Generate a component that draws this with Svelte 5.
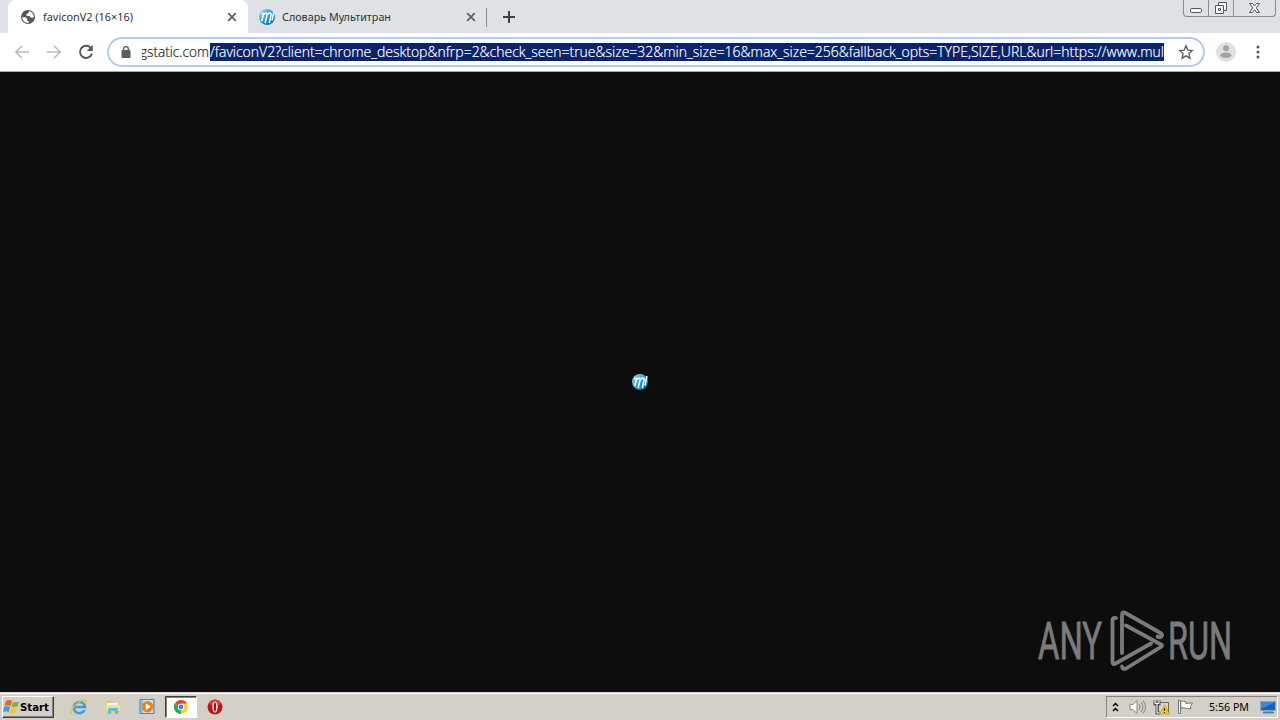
<script lang="ts">
  const tabs = [
    { title: "faviconV2 (16×16)", icon: "globe", width: 90, active: true },
    { title: "Словарь Мультитран", icon: "site", width: 109, active: false },
  ];
  const host = "gstatic.com";
  const path =
    "/faviconV2?client=chrome_desktop&nfrp=2&check_seen=true&size=32&min_size=16&max_size=256&fallback_opts=TYPE,SIZE,URL&url=https://www.mul";
  const time = "5:56 PM";
</script>

{#snippet siteIcon(id: string)}
  <svg class="icon16" viewBox="0 0 16 16">
    <defs>
      <linearGradient id={id} x1="0" y1="0" x2="1" y2="1">
        <stop offset="0" stop-color="#b5dbe9" />
        <stop offset=".5" stop-color="#2b9fd0" />
        <stop offset="1" stop-color="#075e96" />
      </linearGradient>
    </defs>
    <circle cx="8" cy="8" r="8" fill={`url(#${id})`} />
    <path d="M2 4.6h2.6L2.8 12M5 5.2c2.2-1.7 3.4-1 3 .8L6.2 14M8.9 5.2c2-1.8 3.7-1.3 3.2.7L10.3 14M15 2.2 13 11.5" fill="none" stroke="#fff" stroke-width="1.5" />
  </svg>
{/snippet}

<div class="screen">
  <header class="tabstrip">
    {#each tabs as tab}
      <div class="tab" class:active={tab.active}>
        {#if tab.icon === "globe"}
          <svg class="icon16" viewBox="0 0 16 16">
            <circle cx="8" cy="8" r="7" fill="#55585c" />
            <path d="M2.2 8.2h3.2l2 1.7-.2 1.5 1.4 1v1.5C4.8 14 2.3 11.5 2.2 8.2zM9.2 2.2c2.8.6 4.6 3 4.7 5.5l-1 1.1-2.4-.4-1-1.3H7L6 5.6l2-1.2z" fill="#fff" />
          </svg>
        {:else}
          {@render siteIcon("tab-icon")}
        {/if}
        <svg class="title" width="184" height="18">
          <text x="0" y="13" textLength={tab.width} lengthAdjust="spacingAndGlyphs">{tab.title}</text>
        </svg>
        <svg class="close" viewBox="0 0 10 10"><path d="m1.2 1.2 7.6 7.6m0-7.6L1.2 8.8" /></svg>
      </div>
    {/each}
    <span class="divider"></span>
    <svg class="plus" viewBox="0 0 14 14"><path d="M7 1v12M1 7h12" /></svg>
    <div class="window-buttons">
      <span class="min"><svg width="12" height="5"><rect x=".5" y=".5" width="11" height="4" rx="1" /></svg></span>
      <span class="restore">
        <svg width="14" height="14"><path d="M4.5 4V1.5h8v8H10M1.5 4.5h8v8h-8zM4.5 7.5h2v2h-2z" /></svg>
      </span>
      <span class="exit">
        <svg width="13" height="12"><path d="M1.5 1.5h3l2 2.4 2-2.4h3L8.3 5.8l3.2 4.7h-3l-2-2.7-2 2.7h-3l3.2-4.7z" /></svg>
      </span>
    </div>
  </header>

  <nav class="toolbar">
    <svg class="nav muted" viewBox="0 0 16 16"><path d="M15 8H2m6-6.2L1.8 8 8 14.2" /></svg>
    <svg class="nav muted" viewBox="0 0 16 16"><path d="M1 8h13M8 1.8 14.2 8 8 14.2" /></svg>
    <svg class="nav" viewBox="0 0 16 16">
      <path d="M13.4 4.8A6.1 6.1 0 1 0 14 9.4" />
      <path d="M14.8 1v6H8.7z" class="solid" />
    </svg>
    <div class="omnibox">
      <svg class="lock" viewBox="0 0 10 12">
        <rect x=".5" y="4" width="9" height="8" rx="1" fill="#5a5c60" />
        <path d="M2.6 5V3a2.4 2.4 0 0 1 4.8 0v2" fill="none" stroke="#5a5c60" stroke-width="1.4" />
      </svg>
      <svg class="host" width="68" height="18"><text x="-2" y="14" textLength="69" lengthAdjust="spacingAndGlyphs">{host}</text></svg>
      <svg class="selected" width="954" height="18">
        <text x="0" y="14" textLength="954" lengthAdjust="spacingAndGlyphs">{path}</text>
      </svg>
      <svg class="star" viewBox="0 0 16 16"><path d="m8 1.8 1.8 4.3 4.6.4-3.5 3.1 1 4.6L8 11.8l-3.9 2.4 1-4.6-3.5-3.1 4.6-.4z" /></svg>
    </div>
    <svg class="avatar" viewBox="0 0 20 20">
      <circle cx="10" cy="10" r="10" fill="#e0e1e3" />
      <circle cx="10" cy="6.3" r="3" fill="#a1a3a6" />
      <ellipse cx="10" cy="13.3" rx="5.5" ry="2.8" fill="#a1a3a6" />
    </svg>
    <svg class="menu" viewBox="0 0 4 16">
      <circle cx="2" cy="3" r="1.5" /><circle cx="2" cy="8" r="1.5" /><circle cx="2" cy="13" r="1.5" />
    </svg>
  </nav>

  <main>
    {@render siteIcon("page-icon")}
    <svg class="watermark" width="200" height="68" viewBox="0 0 200 68">
      <text x="2" y="53" textLength="64" lengthAdjust="spacingAndGlyphs">ANY</text>
      <g>
        <path d="M80 12q-3.5-1-3.5 2.5V56q0 3.5 3 1.5L115 37.5" />
        <path d="M86 47V9q0-4 3.5-2L124.500 27q2.500 1.500 1 3.500-1.500 1.500-4 0" />
        <path d="m90 19.500 35 19q2 1.200 0 2.400L90 62.500q-3.500 1.500-4-2" />
      </g>
      <text x="132" y="53" textLength="64" lengthAdjust="spacingAndGlyphs">RUN</text>
    </svg>
  </main>

  <footer class="taskbar">
    <div class="start">
      <svg width="17" height="16" viewBox="0 0 17 16">
        <path d="M3 2q3-2 6 0L7.5 7Q4.500 5.500 1.400 7z" fill="#e76329" />
        <path d="M10 2.500q3 1.700 6 0l-1.500 5q-3 1.500-6 0z" fill="#79b54a" />
        <path d="M1.100 8q3-1.500 6 0l-1.500 5q-3-1.500-5.500 0z" fill="#4b96cf" />
        <path d="M8 8.500q3 1.500 6 0l-1.500 5q-3 1.500-6 0z" fill="#f5c338" />
      </svg>
      <svg width="31" height="16"><text x="0" y="12" textLength="29" lengthAdjust="spacingAndGlyphs">Start</text></svg>
    </div>
    <div class="launchers">
      <span>
        <svg width="18" height="18" viewBox="0 0 18 18">
          <path d="M14.5 12a5.600 5.600 0 1 1 .5-3H5" fill="none" stroke="#3c9eda" stroke-width="2.6" />
          <path d="M2 15c-3 2 0-7 7-11 5-3 8-3 7 1" fill="none" stroke="#e8bd44" stroke-width="1.2" />
        </svg>
      </span>
      <span>
        <svg width="18" height="18" viewBox="0 0 18 18">
          <path d="M2 3h6l1 2h7v10H2z" fill="#e6ca68" />
          <path d="M3 5h11v2H3z" fill="#fff" />
          <path d="M2 7h14v6H2z" fill="#f4df93" />
          <path d="M4 16v-5q0-1 1-1h8q1 0 1 1v5h-3v-3H7v3z" fill="#67b9de" />
        </svg>
      </span>
      <span>
        <svg width="17" height="18" viewBox="0 0 17 18">
          <path d="M1 1.500h14v14H1z" fill="#8fc4e8" stroke="#4687bc" />
          <path d="M4 2h10v13H4z" fill="#c6e3f4" />
          <circle cx="8.500" cy="8.800" r="5.700" fill="#ef8117" />
          <path d="m6.800 5.600 5 3.200-5 3.300z" fill="#fff" />
        </svg>
      </span>
      <span class="running">
        <svg width="14" height="14" viewBox="0 0 14 14">
          <circle cx="7" cy="7" r="7" fill="#f9cd3b" />
          <path d="M7 7v7A7 7 0 0 1 .9 3.500z" fill="#31a45a" />
          <path d="M.9 3.500A7 7 0 0 1 13.100 3.500H7V7z" fill="#df4937" />
          <circle cx="7" cy="7" r="3.200" fill="#fff" />
          <circle cx="7" cy="7" r="2.400" fill="#467fdc" />
        </svg>
      </span>
      <span>
        <svg width="16" height="16" viewBox="0 0 16 16">
          <circle cx="8" cy="8" r="7.500" fill="#b51818" />
          <path d="M2 5a6.400 6.400 0 0 1 12 0Q8 8 2 5" fill="#cf4541" />
          <ellipse cx="8" cy="8" rx="2.600" ry="5.500" fill="#fff" />
          <ellipse cx="8" cy="8" rx="1.200" ry="4.700" fill="#a91414" />
        </svg>
      </span>
    </div>
    <div class="tray">
      <svg class="chevrons" width="7" height="11"><path d="m1 4 2.500-2.500L6 4M1 9l2.500-2.500L6 9" /></svg>
      <svg class="volume" width="18" height="16" viewBox="0 0 18 16">
        <path d="M1 5.500h3l4-4v13l-4-4H1z" fill="#f8f8f6" stroke="#8b8b88" />
        <path d="M10 5q2.200 3 0 6M12 3q3.800 5 0 10M14 1.500q5 6.500 0 13" fill="none" stroke="#898985" />
      </svg>
      <svg class="network" width="17" height="17" viewBox="0 0 17 17">
        <path d="M5.500 3.500h10v10h-10z" fill="#d6d6d0" stroke="#696963" />
        <path d="M2 1v4h4V1M4 5v9h3" fill="none" stroke="#555" stroke-width="3" />
        <path d="M2 1v3.500h4V1M4 5v9h3" fill="none" stroke="#fff" />
        <path d="m11.500 6 5 9h-10z" fill="#f8ce24" stroke="#b58c11" stroke-width=".6" />
        <path d="M11.500 9v3M11.500 13v1" stroke="#343019" stroke-width="1.2" />
      </svg>
      <svg class="flag" width="17" height="16" viewBox="0 0 17 16">
        <path d="M1.500 1.500h2v13h-2zM3.500 2.500q3-1 5.500.5v1.500q2-.5 6.500-.5l-2 3.500.5 2q-4 .8-6-.5-2-.8-4 .5z" fill="#f8f8f4" stroke="#777771" />
      </svg>
      <svg class="clock" width="41" height="16"><text x="0" y="12" textLength="40" lengthAdjust="spacingAndGlyphs">{time}</text></svg>
      <svg class="desktop" width="16" height="15" viewBox="0 0 16 15">
        <path d="M.5 1.500h15v9H.5z" fill="#1763b6" stroke="#87a7bf" />
        <path d="M1 2h14L1 9z" fill="#3c8bd2" />
        <path d="M3 12.500h11" stroke="#507b9e" stroke-width="2" />
      </svg>
    </div>
  </footer>
</div>

<style>
  :global(body) {
    margin: 0;
  }

  .screen {
    width: 1280px;
    height: 720px;
    display: grid;
    grid-template-rows: 33px 39px 620px 28px;
    overflow: hidden;
    background: #0d0d0d;
    font-family: "Noto Sans", sans-serif;
  }

  svg {
    display: block;
    flex: none;
  }

  .icon16 {
    width: 16px;
    height: 16px;
  }

  .tabstrip {
    display: flex;
    background: #dee1e6;
    padding-left: 8px;
  }

  .tab {
    box-sizing: border-box;
    width: 239px;
    height: 33px;
    display: flex;
    align-items: center;
    padding: 0 10px 0 11px;
  }

  .tab.active {
    width: 240px;
    background: #fff;
    border-radius: 7px 7px 0 0;
    padding: 0 11px 0 12px;
  }

  .title {
    margin-left: 7px;
    font-size: 11px;
    fill: #303236;
  }

  .close {
    width: 10px;
    height: 10px;
    stroke: #5f6368;
    stroke-width: 1.8;
  }

  .divider {
    width: 1px;
    height: 19px;
    margin-top: 8px;
    margin-left: -1px;
    background: #858990;
  }

  .plus {
    width: 14px;
    height: 14px;
    margin: 10px 0 0 15px;
    stroke: #3c4043;
    stroke-width: 2;
  }

  .window-buttons {
    box-sizing: border-box;
    display: flex;
    width: 93px;
    height: 17px;
    margin: 0 4px 0 auto;
    border: 1px solid #858b93;
    border-top: 0;
    border-radius: 0 0 4px 4px;
  }

  .window-buttons span {
    box-sizing: border-box;
    width: 25px;
    height: 16px;
    display: flex;
    justify-content: center;
    align-items: center;
    border-right: 1px solid #858b93;
  }

  .window-buttons .min {
    align-items: flex-end;
    padding-bottom: 3px;
  }

  .window-buttons .exit {
    width: 41px;
    border: 0;
  }

  .window-buttons svg {
    fill: #f5f6f7;
    stroke: #54585e;
  }

  .toolbar {
    box-sizing: border-box;
    display: flex;
    align-items: center;
    background: #fff;
    border-bottom: 1px solid #aaa;
    padding-left: 14px;
  }

  .nav {
    width: 16px;
    height: 16px;
    margin-right: 16px;
    fill: none;
    stroke: #54575b;
    stroke-width: 1.9;
  }

  .nav.muted {
    stroke: #b8babd;
    stroke-width: 1.6;
  }

  .nav .solid {
    fill: #54575b;
    stroke: none;
  }

  .omnibox {
    box-sizing: border-box;
    width: 1098px;
    height: 30px;
    display: flex;
    align-items: center;
    border: 2px solid #b5caee;
    border-radius: 15px;
    margin-left: -3px;
    padding-left: 12px;
    font-size: 14px;
    font-weight: 300;
  }

  .lock {
    width: 10px;
    height: 12px;
  }

  .host {
    margin-left: 11px;
    fill: #202124;
    stroke: #202124;
  }

  .selected {
    background: #0a246a;
    fill: #fff;
    stroke: #fff;
  }

  .host,
  .selected {
    font-family: "Open Sans", "Noto Sans", sans-serif;
    stroke-width: 0.2;
  }

  .star {
    width: 16px;
    height: 16px;
    margin-left: 14px;
    fill: none;
    stroke: #5f6368;
    stroke-width: 1.4;
  }

  .avatar {
    width: 20px;
    height: 20px;
    margin-left: 11px;
  }

  .menu {
    width: 4px;
    height: 16px;
    margin-left: 20px;
    fill: #55585c;
  }

  main {
    position: relative;
    display: flex;
    align-items: center;
    justify-content: center;
    background: #0d0d0d;
  }

  .watermark {
    position: absolute;
    right: 44px;
    bottom: 18px;
    overflow: visible;
    fill: #7b7b7b;
    stroke: #7b7b7b;
    stroke-width: 0.8;
    font-family: Roboto, sans-serif;
    font-size: 51px;
  }

  .watermark g {
    fill: none;
    stroke-width: 3.8;
    stroke-linejoin: round;
    stroke-linecap: round;
  }

  .taskbar {
    box-sizing: border-box;
    display: flex;
    align-items: center;
    background: #d4d0c8;
    box-shadow: inset 0 1px #d4d0c8, inset 0 2px #fff;
    padding: 2px 2px 0;
    font-family: "DejaVu Sans", sans-serif;
    font-size: 11px;
  }

  .start {
    box-sizing: border-box;
    width: 52px;
    height: 22px;
    display: flex;
    align-items: center;
    border: 1px solid #fff;
    border-right-color: #404040;
    border-bottom-color: #404040;
    box-shadow: inset -1px -1px #858279;
    font-weight: bold;
  }

  .launchers {
    display: flex;
    margin-left: 8px;
  }

  .launchers span {
    box-sizing: border-box;
    width: 34px;
    height: 22px;
    display: flex;
    align-items: center;
    justify-content: center;
  }

  .launchers .running {
    width: 32px;
    margin: 0 1px;
    background: #fff;
    border: 1px solid #404040;
    border-right-color: #fff;
    border-bottom-color: #fff;
    box-shadow: inset 1px 1px #858279;
  }

  .tray {
    box-sizing: border-box;
    width: 172px;
    height: 22px;
    display: flex;
    align-items: center;
    margin-left: auto;
    padding-left: 5px;
    border: 1px solid #858279;
    border-right-color: #fff;
    border-bottom-color: #fff;
  }

  .chevrons {
    fill: none;
    stroke: #000;
    stroke-width: 1.5;
  }

  .volume {
    margin-left: 10px;
  }

  .network {
    margin-left: 6px;
  }

  .flag {
    margin-left: 7px;
  }

  .clock {
    margin-left: 15px;
    font-family: "Noto Sans", sans-serif;
  }

  .desktop {
    margin-left: 10px;
  }
</style>
